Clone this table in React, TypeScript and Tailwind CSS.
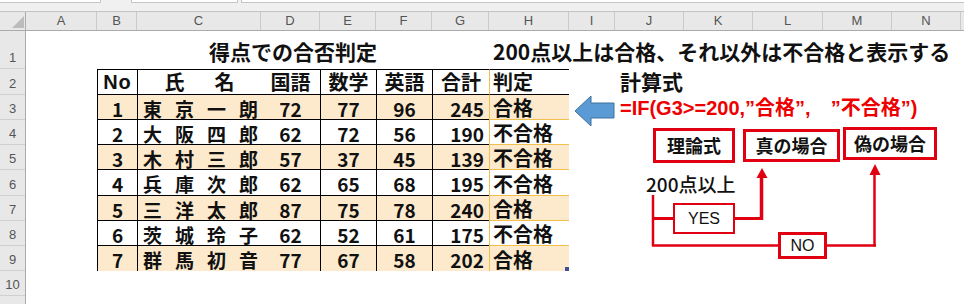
import React from 'react';

const COLS = [
  { l: 'A', w: 'w-[71px]' },
  { l: 'B', w: 'w-[40px]' },
  { l: 'C', w: 'w-[124px]' },
  { l: 'D', w: 'w-[59px]' },
  { l: 'E', w: 'w-[56px]' },
  { l: 'F', w: 'w-[56px]' },
  { l: 'G', w: 'w-[57px]' },
  { l: 'H', w: 'w-[80px]' },
  { l: 'I', w: 'w-[46px]' },
  { l: 'J', w: 'w-[69px]' },
  { l: 'K', w: 'w-[69px]' },
  { l: 'L', w: 'w-[70px]' },
  { l: 'M', w: 'w-[69px]' },
  { l: 'N', w: 'w-[69px]' },
];

const ROW_HEADS = [
  { n: '1', h: 'h-[38px]' },
  { n: '2', h: 'h-[26px]' },
  { n: '3', h: 'h-[25px]' },
  { n: '4', h: 'h-[25px]' },
  { n: '5', h: 'h-[25px]' },
  { n: '6', h: 'h-[26px]' },
  { n: '7', h: 'h-[25px]' },
  { n: '8', h: 'h-[25px]' },
  { n: '9', h: 'h-[25px]' },
  { n: '10', h: 'h-[25px]' },
  { n: '', h: 'h-[25px]' },
];

const students = [
  { no: 1, name: '東京一朗', jp: 72, math: 77, en: 96, sum: 245, res: '合格', h: 'h-[25px]' },
  { no: 2, name: '大阪四郎', jp: 62, math: 72, en: 56, sum: 190, res: '不合格', h: 'h-[25px]' },
  { no: 3, name: '木村三郎', jp: 57, math: 37, en: 45, sum: 139, res: '不合格', h: 'h-[25px]' },
  { no: 4, name: '兵庫次郎', jp: 62, math: 65, en: 68, sum: 195, res: '不合格', h: 'h-[26px]' },
  { no: 5, name: '三洋太郎', jp: 87, math: 75, en: 78, sum: 240, res: '合格', h: 'h-[25px]' },
  { no: 6, name: '茨城玲子', jp: 62, math: 52, en: 61, sum: 175, res: '不合格', h: 'h-[25px]' },
  { no: 7, name: '群馬初音', jp: 77, math: 67, en: 58, sum: 202, res: '合格', h: 'h-[25px]' },
];

const FORMULA = '=IF(G3>=200,\u201D合格\u201D,\u3000\u201D不合格\u201D)';

export default function App() {
  return (
    <div className="relative w-[964px] h-[304px] overflow-hidden bg-white text-[#111] font-['Noto_Sans_CJK_JP','Noto_Sans_CJK_SC',sans-serif]">
      {/* formula bar remnant */}
      <div className="flex items-start h-[12px] bg-[#f0f0f0] border-b border-[#c4c4c4]">
        <div className="w-[101px] h-[3px] bg-white border-r border-b border-[#c6c6c6]" />
        <div className="ml-[30px] w-[107px] h-[3px] bg-white border-x border-b border-[#c6c6c6]" />
        <div className="ml-[3px] flex-1 h-[3px] bg-white border-l border-b border-[#c6c6c6]" />
      </div>

      {/* column headers */}
      <div className="flex h-[19px] bg-[#e8e8e8] border-b border-[#ababab] font-['Liberation_Sans',sans-serif]">
        <div className="relative w-[26px] shrink-0 border-r border-[#ababab]">
          <svg className="absolute left-0 top-0" width="26" height="19" viewBox="0 0 26 19">
            <polygon points="24,4 24,16 12,16" fill="#bcbcbc" />
          </svg>
        </div>
        {COLS.map((c) => (
          <div
            key={c.l}
            className={`${c.w} shrink-0 flex items-center justify-center border-r border-[#cacaca] text-[13px] text-[#555]`}
          >
            {c.l}
          </div>
        ))}
        <div className="flex-1" />
      </div>

      <div className="flex">
        {/* row headers */}
        <div className="w-[26px] shrink-0 bg-[#e8e8e8] border-r border-[#ababab] font-['Liberation_Sans',sans-serif]">
          {ROW_HEADS.map((r, i) => (
            <div
              key={i}
              className={`${r.h} flex items-end justify-center pb-[4px] border-b border-[#d0d0d0] text-[13px] leading-none text-[#555]`}
            >
              {r.n}
            </div>
          ))}
        </div>

        {/* sheet */}
        <div className="flex-1 flex flex-col">
          {/* row 1 */}
          <div className="flex h-[38px]">
            <div className="w-[71px] shrink-0" />
            <div className="w-[392px] shrink-0 flex items-center justify-center pt-[3px] text-[21px] font-bold whitespace-nowrap">
              得点での合否判定
            </div>
            <div className="flex items-center pt-[3px] pl-[4px] text-[21px] font-bold whitespace-nowrap">
              200点以上は合格、それ以外は不合格と表示する
            </div>
          </div>

          {/* row 2: table header */}
          <div className="flex h-[26px] text-[20px] font-bold">
            <div className="w-[71px] shrink-0" />
            <div className="w-[40px] shrink-0 flex items-center justify-center border-l border-y border-black font-['Liberation_Sans',sans-serif] tracking-[1px]">
              No
            </div>
            <div className="w-[124px] shrink-0 flex items-center justify-center gap-[30px] border-l border-y border-black">
              <span>氏</span>
              <span>名</span>
            </div>
            <div className="w-[59px] shrink-0 flex items-center justify-center border-y border-black">国語</div>
            <div className="w-[56px] shrink-0 flex items-center justify-center border-l border-y border-black">数学</div>
            <div className="w-[56px] shrink-0 flex items-center justify-center border-l border-y border-black">英語</div>
            <div className="w-[57px] shrink-0 flex items-center justify-center border-l border-y border-black">合計</div>
            <div className="w-[80px] shrink-0 flex items-center pl-[3px] border-l border-l-[#f1bf4c] border-y border-black">判定</div>
            <div className="w-[46px] shrink-0" />
            <div className="flex items-center pl-[5px] text-[21px] whitespace-nowrap">計算式</div>
          </div>

          {/* rows 3-9 */}
          {students.map((s, i) => {
            const fill = i % 2 === 0 ? 'bg-[#fde9cc]' : 'bg-white';
            const last = i === students.length - 1;
            const bb = last ? '' : 'border-b border-black';
            const hb = last ? '' : 'border-b border-[#f1bf4c]';
            return (
              <div key={s.no} className={`flex ${s.h} text-[19px] font-bold leading-none`}>
                <div className="w-[71px] shrink-0" />
                <div className={`w-[40px] shrink-0 flex items-center justify-center pt-[2px] border-l border-black ${bb} ${fill}`}>{s.no}</div>
                <div className={`w-[124px] shrink-0 flex items-center justify-between pl-[5px] pr-[3px] pt-[2px] border-l border-black ${bb} ${fill}`}>
                  {s.name.split('').map((ch, k) => (
                    <span key={k}>{ch}</span>
                  ))}
                </div>
                <div className={`w-[59px] shrink-0 flex items-center justify-center pt-[2px] ${bb} ${fill}`}>{s.jp}</div>
                <div className={`w-[56px] shrink-0 flex items-center justify-center pt-[2px] border-l border-black ${bb} ${fill}`}>{s.math}</div>
                <div className={`w-[56px] shrink-0 flex items-center justify-center pt-[2px] border-l border-black ${bb} ${fill}`}>{s.en}</div>
                <div className={`w-[57px] shrink-0 flex items-center justify-end pr-[5px] pt-[2px] border-l border-black ${bb} ${fill}`}>{s.sum}</div>
                <div className={`relative w-[80px] shrink-0 flex items-center pl-[3px] pt-[2px] border-l border-[#f1bf4c] ${hb} ${fill} text-[20px]`}>
                  {s.res}
                  {last && <div className="absolute right-0 bottom-0 w-[4px] h-[4px] bg-[#3d4f94]" />}
                </div>
                <div className="w-[46px] shrink-0" />
                {i === 0 && (
                  <div className="flex items-center pl-[5px] text-[20px] text-[#ee0000] whitespace-nowrap font-['Liberation_Sans','Noto_Sans_CJK_JP',sans-serif]">
                    {FORMULA}
                  </div>
                )}
              </div>
            );
          })}
        </div>
      </div>

      {/* blue arrow pointing at the result column */}
      <svg className="absolute left-[574px] top-[95px]" width="42" height="33" viewBox="0 0 42 33">
        <polygon points="1,16 17,1 17,8 40,8 40,23 17,23 17,31" fill="#5b9bd5" stroke="#41719c" strokeWidth="1" />
      </svg>

      {/* flow lines */}
      <svg className="absolute left-0 top-0 pointer-events-none" width="964" height="304" viewBox="0 0 964 304">
        <g stroke="#e00012" fill="none">
          <line x1="653" y1="195" x2="653" y2="246" strokeWidth="2.5" />
          <line x1="652" y1="218.5" x2="674" y2="218.5" strokeWidth="3" />
          <line x1="734" y1="218.5" x2="763" y2="218.5" strokeWidth="3" />
          <line x1="761.5" y1="220" x2="761.5" y2="176" strokeWidth="3.5" />
          <line x1="652" y1="245.5" x2="779" y2="245.5" strokeWidth="2.5" />
          <line x1="826" y1="245.5" x2="876" y2="245.5" strokeWidth="2.5" />
          <line x1="874.5" y1="246.5" x2="874.5" y2="173" strokeWidth="2.5" />
        </g>
        <polygon points="762,168 756.5,178 767.5,178" fill="#e00012" />
        <polygon points="875,164 869.5,175 880.5,175" fill="#e00012" />
      </svg>

      {/* flow boxes */}
      <div className="absolute left-[653px] top-[128px] w-[82px] h-[35px] flex items-center justify-center border-[3px] border-[#e00012] bg-white text-[18px] font-bold">
        理論式
      </div>
      <div className="absolute left-[743px] top-[129px] w-[97px] h-[33px] flex items-center justify-center border-[3px] border-[#e00012] bg-white text-[18px] font-bold">
        真の場合
      </div>
      <div className="absolute left-[843px] top-[127px] w-[94px] h-[33px] flex items-center justify-center border-[3px] border-[#e00012] bg-white text-[18px] font-bold">
        偽の場合
      </div>
      <div className="absolute left-[646px] top-[173px] text-[19px] leading-[22px] font-medium whitespace-nowrap">
        200点以上
      </div>
      <div className="absolute left-[673px] top-[203px] w-[62px] h-[31px] flex items-center justify-center border-2 border-[#e00012] bg-white text-[16px] font-['Liberation_Sans',sans-serif]">
        YES
      </div>
      <div className="absolute left-[778px] top-[232px] w-[49px] h-[27px] flex items-center justify-center border-[3px] border-[#e00012] bg-white text-[16px] font-['Liberation_Sans',sans-serif]">
        NO
      </div>
    </div>
  );
}
